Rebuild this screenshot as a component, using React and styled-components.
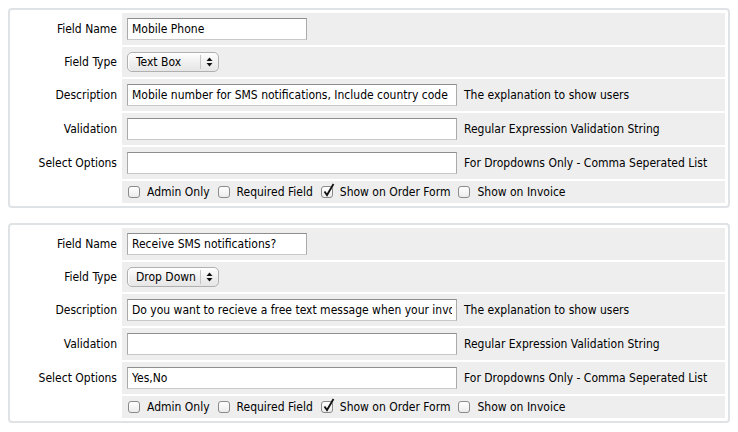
import React from 'react'
import styled, { createGlobalStyle } from 'styled-components';

const GlobalStyle = createGlobalStyle`
body{
  margin:8px;
  background:#fff;
  font-family:"DejaVu Sans Condensed","DejaVu Sans",Tahoma,sans-serif;
  font-size:12px;
  color:#000;
}
`;

const Box = styled.div`
border:2px solid #dfe3e6;
border-radius:4px;
padding:3px;
margin-bottom:15px;
display:grid;
grid-template-columns:107px 1fr;
gap:2px;
`;

const Label = styled.div`
display:flex;
align-items:center;
justify-content:flex-end;
padding-right:3px;
white-space:nowrap;
`;

const Cell = styled.div`
background:#eeeeee;
display:flex;
align-items:center;
padding:${({$tight})=>$tight ? '4px 5px' : '5px'};
white-space:nowrap;
`;

const Input = styled.input`
box-sizing:border-box;
width:${({$w})=>$w}px;
height:22px;
margin:0;
padding:0 4px;
border:1px solid #aaaaaa;
border-top-color:#8e8e8e;
border-bottom-color:#c8c8c8;
background:#fff;
font-family:inherit;
font-size:12px;
color:#000;
outline:none;
`;

const Help = styled.span`
margin-left:7px;
`;

const Select = styled.div`
box-sizing:border-box;
width:92px;
height:20px;
display:flex;
align-items:stretch;
border:1px solid #b0b0b0;
border-radius:5px;
background:linear-gradient(#ffffff, #f0f0f0 50%, #e6e6e6);
box-shadow:inset 1px 0 0 #fff;
`;

const SelectText = styled.span`
flex:1;
display:flex;
align-items:center;
padding-left:8px;
`;

const SelectArrow = styled.span`
width:17px;
display:flex;
align-items:center;
justify-content:center;
border-left:1px solid #c4c4c4;
margin:2px 0;
`;

const Options = styled.div`
display:flex;
align-items:center;
`;

const Option = styled.label`
display:flex;
align-items:center;
margin-right:7px;
`;

const Check = styled.span`
position:relative;
box-sizing:border-box;
width:12px;
height:12px;
margin:0 7px 0 1px;
border:1px solid #8a8a8a;
border-radius:3px;
background:linear-gradient(#ffffff, #ececec);
svg{
  position:absolute;
  left:1px;
  top:-4px;
}
`;

const Arrows = () => (
  <svg width="7" height="10" viewBox="0 0 7 10">
    <path d="M3.5 0.5 L6.5 4 L0.5 4 Z" fill="#111"/>
    <path d="M3.5 9.5 L6.5 6 L0.5 6 Z" fill="#111"/>
  </svg>
);

const Checkbox = ({checked}) => (
  <Check>
    {checked && (
      <svg width="12" height="14" viewBox="0 0 12 14">
        <path d="M1.5 8.5 L4 12 L10.5 1" fill="none" stroke="#111" strokeWidth="1.8"/>
      </svg>
    )}
  </Check>
);

const flags = ['Admin Only','Required Field','Show on Order Form','Show on Invoice'];

const FieldBlock = ({name,type,description,options}) => (
  <Box>
    <Label>Field Name</Label>
    <Cell><Input $w={180} value={name} readOnly/></Cell>

    <Label>Field Type</Label>
    <Cell>
      <Select>
        <SelectText>{type}</SelectText>
        <SelectArrow><Arrows/></SelectArrow>
      </Select>
    </Cell>

    <Label>Description</Label>
    <Cell><Input $w={330} value={description} readOnly/><Help>The explanation to show users</Help></Cell>

    <Label>Validation</Label>
    <Cell><Input $w={330} value="" readOnly/><Help>Regular Expression Validation String</Help></Cell>

    <Label>Select Options</Label>
    <Cell><Input $w={330} value={options} readOnly/><Help>For Dropdowns Only - Comma Seperated List</Help></Cell>

    <Label/>
    <Cell $tight>
      <Options>
        {flags.map((f,i)=>(
          <Option key={f}><Checkbox checked={i===2}/>{f}</Option>
        ))}
      </Options>
    </Cell>
  </Box>
);

const App = () => {
  return (
    <>
      <GlobalStyle/>
      <FieldBlock
        name="Mobile Phone"
        type="Text Box"
        description="Mobile number for SMS notifications, Include country code"
        options=""
      />
      <FieldBlock
        name="Receive SMS notifications?"
        type="Drop Down"
        description="Do you want to recieve a free text message when your invoice is generated?"
        options="Yes,No"
      />
    </>
  )
}

export default App
